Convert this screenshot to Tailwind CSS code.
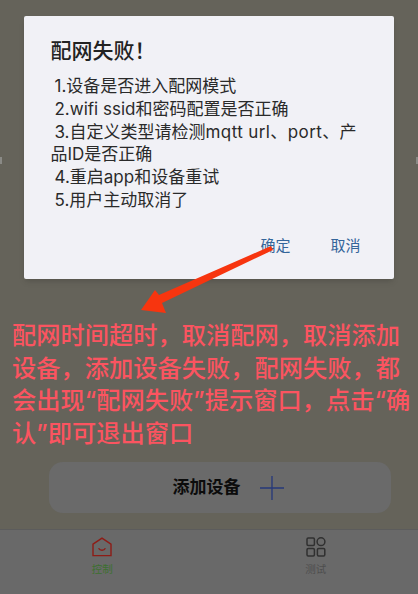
<!DOCTYPE html>
<html lang="zh">
<head>
    <meta charset="UTF-8">
    <meta name="viewport" content="width=device-width, initial-scale=1.0">
    <title>配网失败</title>
    <script src="https://cdn.jsdelivr.net/npm/@tailwindcss/browser@4"></script>
</head>
<body class="overflow-hidden">
    <div class="relative flex flex-col w-[418px] h-[594px] bg-[#65635a] font-['Inter','Noto_Sans_CJK_SC',sans-serif]">
        <main class="flex-1 flex flex-col min-h-0">
            <!-- dialog -->
            <section class="flex flex-col ml-[23.5px] mt-4 w-[370px] h-[263px] rounded-[2px] bg-[#f1f1f6] pl-[27px] pr-[30px] pt-5 shadow-md">
                <h2 class="text-[21px] leading-[30px] font-medium text-[#222]">配网失败！</h2>
                <div class="mt-[9px] text-[17px] leading-[22.8px] text-[#2a2a2a]">
                    <p class="pl-1">1.设备是否进入配网模式</p>
                    <p class="pl-1">2.wifi ssid和密码配置是否正确</p>
                    <p><span class="pl-1">3.自定义类型请检测<span class="tracking-[0.4px]">mqtt url、port、</span>产</span><br>品ID是否正确</p>
                    <p class="pl-1">4.重启app和设备重试</p>
                    <p class="pl-1">5.用户主动取消了</p>
                </div>
                <div class="flex justify-end gap-[40px] mt-[23px] mr-[3px] text-[15px] leading-[22px] text-[#34659a]">
                    <button>确定</button>
                    <button>取消</button>
                </div>
            </section>

            <!-- annotation text -->
            <p class="mt-[41px] pl-[12px] text-[24.25px] leading-[32.5px] font-medium text-[#fb5460]">配网时间超时，取消配网，取消添加<br>设备，添加设备失败，配网失败，都<br>会出现“配网失败”提示窗口，点击“确<br>认”即可退出窗口</p>

            <button class="flex items-center justify-center gap-[19px] ml-[49px] w-[342px] pl-[16px] mt-[12px] h-[51px] rounded-[14px] bg-[#6a6a6a] text-[17px] font-bold text-[#0c0c0c]">
                <span>添加设备</span>
                <svg class="w-6 h-6" viewBox="0 0 24 24" fill="none" stroke="#26387a" stroke-width="1.3"><path d="M0 12H24M12 0V24"/></svg>
            </button>
        </main>

        <!-- bottom tabs -->
        <nav class="flex h-[65px] shrink-0 border-t border-[#5c5c5c] bg-[#696969]">
            <a class="flex-1 flex flex-col items-center pt-[7px] pr-[6px]">
                <svg class="w-5 h-5" viewBox="0 0 20 20" fill="none" stroke="#8e1c16" stroke-width="1.4"><path d="M1 7.2L10 1.2L19 7.2V18.6H1Z"/><path d="M6.6 11.2C8 14 12 14 13.4 11.2"/></svg>
                <span class="mt-[6px] text-[10.5px] leading-[14px] text-[#3c7030]">控制</span>
            </a>
            <a class="flex-1 flex flex-col items-center pt-[7px] pl-[3px]">
                <svg class="w-5 h-5" viewBox="0 0 20 20" fill="none" stroke="#303030" stroke-width="1.5"><rect x="1" y="1" width="7.4" height="7.4" rx="1.2"/><circle cx="15" cy="4.7" r="3.9"/><rect x="1" y="11.6" width="7.4" height="7.4" rx="1.2"/><rect x="11.4" y="11.6" width="7.4" height="7.4" rx="1.2"/></svg>
                <span class="mt-[6px] text-[10.5px] leading-[14px] text-[#4e4e4e]">测试</span>
            </a>
        </nav>

        <!-- hand-drawn arrow over the dialog -->
        <svg class="absolute left-0 top-0 w-[418px] h-[594px] pointer-events-none" viewBox="0 0 418 594">
            <path d="M271 246L159 295L155 290L141 310L166 313L162 303L273 250Z" fill="#f7350f"/>
        </svg>

        <!-- edge marks -->
        <span class="absolute left-0 top-[157px] w-[2px] h-[7px] bg-[#8a8a86]"></span>
        <span class="absolute right-0 top-[157px] w-[2px] h-[7px] bg-[#8a8a86]"></span>
    </div>
</body>
</html>
